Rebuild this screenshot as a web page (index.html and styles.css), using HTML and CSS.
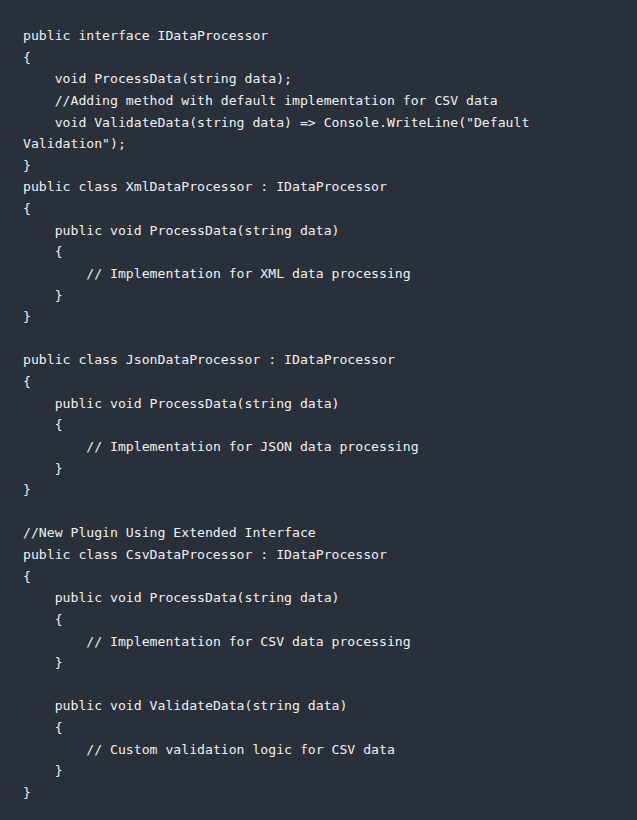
FILE: index.html
```html
<!DOCTYPE html>
<html>
<head>
<meta charset="utf-8">
<link rel="stylesheet" href="styles.css">
</head>
<body>
<pre class="code">public interface IDataProcessor
{
    void ProcessData(string data);
    //Adding method with default implementation for CSV data
    void ValidateData(string data) =&gt; Console.WriteLine("Default Validation");
}
public class XmlDataProcessor : IDataProcessor
{
    public void ProcessData(string data)
    {
        // Implementation for XML data processing
    }
}

public class JsonDataProcessor : IDataProcessor
{
    public void ProcessData(string data)
    {
        // Implementation for JSON data processing
    }
}

//New Plugin Using Extended Interface
public class CsvDataProcessor : IDataProcessor
{
    public void ProcessData(string data)
    {
        // Implementation for CSV data processing
    }

    public void ValidateData(string data)
    {
        // Custom validation logic for CSV data
    }
}</pre>
</body>
</html>
```
FILE: styles.css
```css
html, body {
  margin: 0;
  padding: 0;
  background: #29303a;
  min-height: 100%;
}
.code {
  margin: 0;
  padding: 25px 23px 24px 23px;
  background: #29303a;
  color: #eef0f2;
  font-family: "DejaVu Sans Mono", "Liberation Mono", monospace;
  font-size: 13.15px;
  line-height: 21.63px;
  white-space: pre-wrap;
  word-wrap: break-word;
  min-height: 820px;
  box-sizing: border-box;
}
```
